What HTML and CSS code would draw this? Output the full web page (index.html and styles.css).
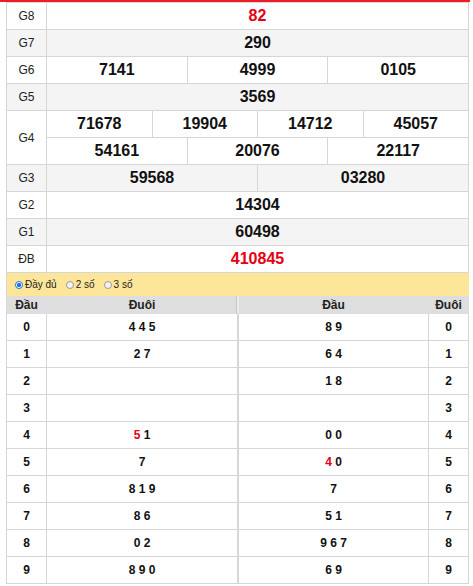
FILE: index.html
```html
<!DOCTYPE html>
<html lang="vi">
<head>
<meta charset="utf-8">
<link rel="stylesheet" href="styles.css">
</head>
<body>
<div class="topbar"></div>
<div class="results">
  <div class="row"><div class="lbl">G8</div><div class="vals"><div class="v red">82</div></div></div>
  <div class="row alt"><div class="lbl">G7</div><div class="vals"><div class="v">290</div></div></div>
  <div class="row"><div class="lbl">G6</div><div class="vals"><div class="v">7141</div><div class="v">4999</div><div class="v">0105</div></div></div>
  <div class="row alt"><div class="lbl">G5</div><div class="vals"><div class="v">3569</div></div></div>
  <div class="row tall"><div class="lbl">G4</div>
    <div class="stack">
      <div class="vals"><div class="v">71678</div><div class="v">19904</div><div class="v">14712</div><div class="v">45057</div></div>
      <div class="vals"><div class="v">54161</div><div class="v">20076</div><div class="v">22117</div></div>
    </div>
  </div>
  <div class="row alt"><div class="lbl">G3</div><div class="vals"><div class="v">59568</div><div class="v">03280</div></div></div>
  <div class="row"><div class="lbl">G2</div><div class="vals"><div class="v">14304</div></div></div>
  <div class="row alt"><div class="lbl">G1</div><div class="vals"><div class="v">60498</div></div></div>
  <div class="row"><div class="lbl">ĐB</div><div class="vals"><div class="v red">410845</div></div></div>
  <div class="options">
    <span class="opt"><span class="radio on"></span>Đầy đủ</span>
    <span class="opt"><span class="radio"></span>2 số</span>
    <span class="opt"><span class="radio"></span>3 số</span>
  </div>
  <div class="loto head">
    <div class="c c1">Đầu</div><div class="c c2">Đuôi</div><div class="c c3">Đầu</div><div class="c c4">Đuôi</div>
  </div>
  <div class="loto"><div class="c c1">0</div><div class="c c2">4 4 5</div><div class="c c3">8 9</div><div class="c c4">0</div></div>
  <div class="loto"><div class="c c1">1</div><div class="c c2">2 7</div><div class="c c3">6 4</div><div class="c c4">1</div></div>
  <div class="loto"><div class="c c1">2</div><div class="c c2"></div><div class="c c3">1 8</div><div class="c c4">2</div></div>
  <div class="loto"><div class="c c1">3</div><div class="c c2"></div><div class="c c3"></div><div class="c c4">3</div></div>
  <div class="loto"><div class="c c1">4</div><div class="c c2"><span class="red">5</span> 1</div><div class="c c3">0 0</div><div class="c c4">4</div></div>
  <div class="loto"><div class="c c1">5</div><div class="c c2">7</div><div class="c c3"><span class="red">4</span> 0</div><div class="c c4">5</div></div>
  <div class="loto"><div class="c c1">6</div><div class="c c2">8 1 9</div><div class="c c3">7</div><div class="c c4">6</div></div>
  <div class="loto"><div class="c c1">7</div><div class="c c2">8 6</div><div class="c c3">5 1</div><div class="c c4">7</div></div>
  <div class="loto"><div class="c c1">8</div><div class="c c2">0 2</div><div class="c c3">9 6 7</div><div class="c c4">8</div></div>
  <div class="loto"><div class="c c1">9</div><div class="c c2">8 9 0</div><div class="c c3">6 9</div><div class="c c4">9</div></div>
</div>
</body>
</html>
```
FILE: styles.css
```css
* { box-sizing: border-box; }
body {
  margin: 0;
  font-family: "Liberation Sans", Arial, sans-serif;
  color: #111;
  background: #fff;
}
.topbar {
  width: 470px;
  height: 2px;
  background: #ee1c25;
}
.results {
  margin-left: 6px;
  width: 463px;
  border-left: 1px solid #d6d6d6;
  border-top: 1px solid #d6d6d6;
}
.row {
  display: flex;
  height: 27px;
}
.row.tall { height: 54px; }
.row.alt { background: #f4f4f4; }
.lbl {
  width: 40px;
  flex: none;
  display: flex;
  align-items: center;
  justify-content: center;
  font-size: 12px;
  color: #222;
  border-right: 1px solid #d6d6d6;
  border-bottom: 1px solid #d6d6d6;
}
.stack {
  flex: 1;
  display: flex;
  flex-direction: column;
}
.stack .vals { height: 27px; flex: none; }
.vals {
  flex: 1;
  display: flex;
}
.v {
  flex: 1;
  display: flex;
  align-items: center;
  justify-content: center;
  font-size: 16px;
  font-weight: bold;
  color: #111;
  border-right: 1px solid #d6d6d6;
  border-bottom: 1px solid #d6d6d6;
}
.red { color: #e60012; }
.v.red { color: #e60012; }
.options {
  height: 23px;
  background: #fde699;
  display: flex;
  align-items: center;
  padding-left: 8px;
  gap: 9px;
  font-size: 10px;
  color: #222;
  border-right: 1px solid #fde699;
}
.opt {
  display: flex;
  align-items: center;
  gap: 2px;
}
.radio {
  width: 8px;
  height: 8px;
  border-radius: 50%;
  border: 1px solid #9a9a9a;
  background: #f2f2f2;
  display: inline-block;
}
.radio.on {
  border-color: #1a73e8;
  background: radial-gradient(circle, #1a73e8 0 2px, #fff 2.3px);
}
.loto {
  display: flex;
  height: 27px;
}
.loto.head {
  height: 18px;
  background: #dedede;
}
.c {
  display: flex;
  align-items: center;
  justify-content: center;
  font-size: 12px;
  font-weight: bold;
  color: #111;
  white-space: pre;
  border-right: 1px solid #d6d6d6;
  border-bottom: 1px solid #d6d6d6;
}
.c1 { width: 40px; }
.c2 { width: 192px; border-right-width: 2px; }
.c3 { width: 190px; }
.c4 { width: 40px; }
.head .c { border-bottom: none; border-right-color: #dedede; color: #222; }
.head .c2 { border-right: 2px solid #ececec; box-shadow: inset -1px 0 0 #c8c8c8; }
```
